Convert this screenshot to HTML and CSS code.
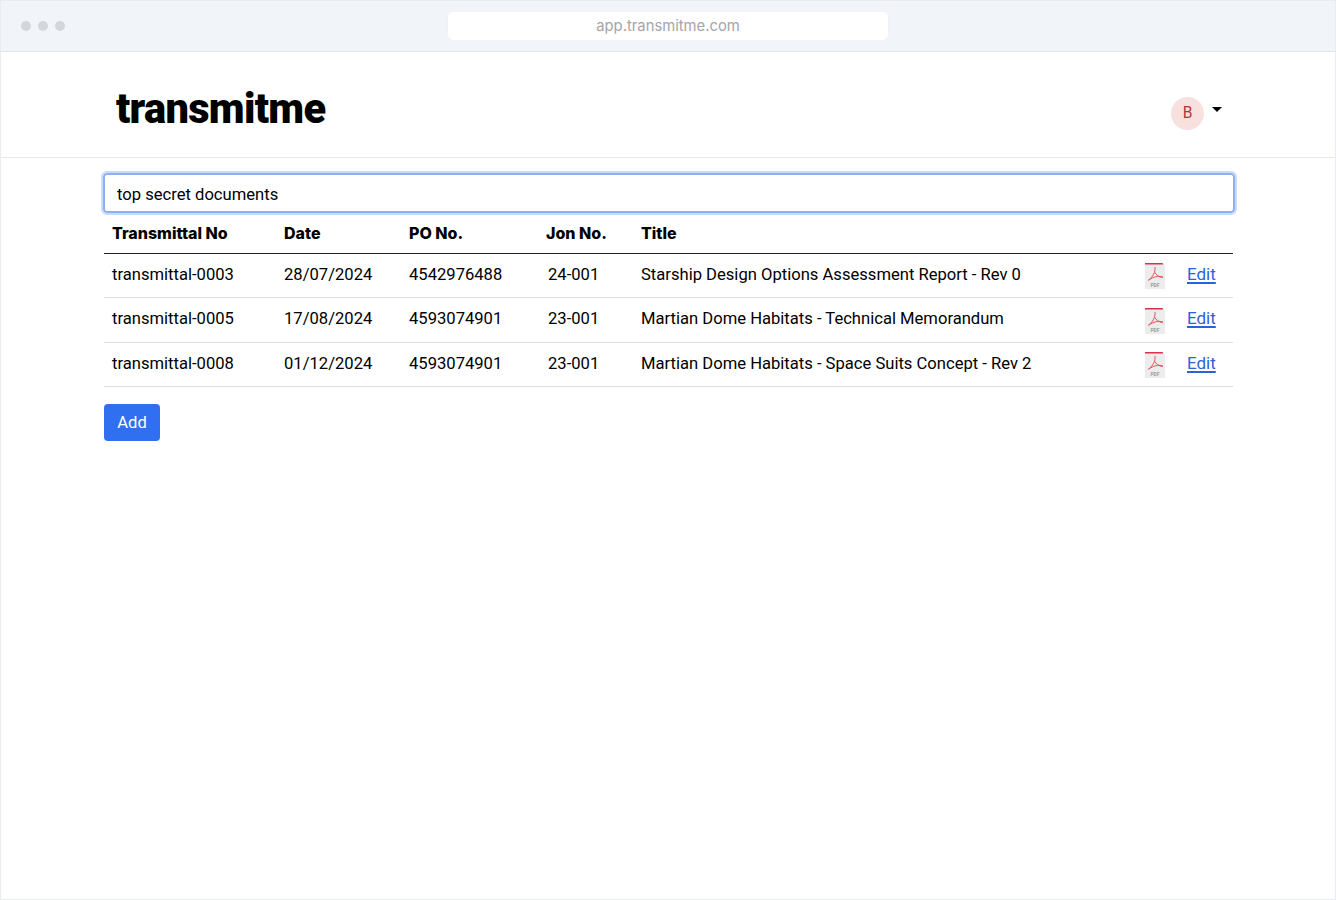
FILE: index.html
```html
<!DOCTYPE html>
<html lang="en">
<head>
<meta charset="utf-8">
<title>transmitme</title>
<link rel="stylesheet" href="styles.css">
</head>
<body>
<div class="window">
  <div class="chrome">
    <div class="dots"><span class="dot"></span><span class="dot"></span><span class="dot"></span></div>
    <div class="address">app.transmitme.com</div>
  </div>
  <header class="topbar">
    <div class="logo">transmitme</div>
    <div class="user">
      <span class="avatar">B</span>
      <span class="caret"></span>
    </div>
  </header>
  <main class="content">
    <input class="search" type="text" value="top secret documents">
    <table class="grid">
      <thead>
        <tr><th class="c-no">Transmittal No</th><th class="c-date">Date</th><th class="c-po">PO No.</th><th class="c-job">Jon No.</th><th>Title</th><th class="c-pdf"></th><th class="c-edit"></th></tr>
      </thead>
      <tbody>
        <tr><td>transmittal-0003</td><td>28/07/2024</td><td>4542976488</td><td class="job">24-001</td><td>Starship Design Options Assessment Report - Rev 0</td>
          <td class="pdf"><svg class="pdf-icon" viewBox="0 0 20 26"><path d="M0 0H17L20 3V26H0Z" fill="#ececec"/><path d="M0 0H17.5L18.5 1.6H0Z" fill="#d9304a"/><path d="M10 4C10.5 9 8 14 3 17.5M10 9.5C11 12 13.5 14 18 14.5M4 17C8 14 13 12.5 18 14" fill="none" stroke="#e0525c" stroke-width="1"/><text x="10" y="23.5" class="pdf-label">PDF</text></svg></td><td class="edit"><a href="#">Edit</a></td></tr>
        <tr><td>transmittal-0005</td><td>17/08/2024</td><td>4593074901</td><td class="job">23-001</td><td>Martian Dome Habitats - Technical Memorandum</td>
          <td class="pdf"><svg class="pdf-icon" viewBox="0 0 20 26"><path d="M0 0H17L20 3V26H0Z" fill="#ececec"/><path d="M0 0H17.5L18.5 1.6H0Z" fill="#d9304a"/><path d="M10 4C10.5 9 8 14 3 17.5M10 9.5C11 12 13.5 14 18 14.5M4 17C8 14 13 12.5 18 14" fill="none" stroke="#e0525c" stroke-width="1"/><text x="10" y="23.5" class="pdf-label">PDF</text></svg></td><td class="edit"><a href="#">Edit</a></td></tr>
        <tr><td>transmittal-0008</td><td>01/12/2024</td><td>4593074901</td><td class="job">23-001</td><td>Martian Dome Habitats - Space Suits Concept - Rev 2</td>
          <td class="pdf"><svg class="pdf-icon" viewBox="0 0 20 26"><path d="M0 0H17L20 3V26H0Z" fill="#ececec"/><path d="M0 0H17.5L18.5 1.6H0Z" fill="#d9304a"/><path d="M10 4C10.5 9 8 14 3 17.5M10 9.5C11 12 13.5 14 18 14.5M4 17C8 14 13 12.5 18 14" fill="none" stroke="#e0525c" stroke-width="1"/><text x="10" y="23.5" class="pdf-label">PDF</text></svg></td><td class="edit"><a href="#">Edit</a></td></tr>
      </tbody>
    </table>
    <button class="add" type="button">Add</button>
  </main>
</div>
</body>
</html>
```
FILE: styles.css
```css
* { box-sizing: border-box; }
html, body { margin: 0; padding: 0; background: #fff; }
body { font-family: Roboto, "Liberation Sans", sans-serif; color: #000; font-size: 16.6px; }
.window { height: 900px; border: 1px solid #e9ecf0; display: flex; flex-direction: column; }
.chrome { height: 51px; flex: none; background: #f1f4f9; border-bottom: 1px solid #e2e5ea; display: flex; align-items: center; justify-content: center; position: relative; }
.dots { position: absolute; left: 20px; top: 20px; display: flex; gap: 7px; }
.dot { width: 10px; height: 10px; border-radius: 50%; background: #d3d7dc; }
.address { width: 440px; height: 28px; margin-top: -1px; background: #fff; border-radius: 5px; box-shadow: 0 0 1px #dfe3e8; color: #a3a5a9; font: 14.8px/28px Inter, sans-serif; text-align: center; }
.topbar { height: 106px; flex: none; border-bottom: 1px solid #e8e8e8; display: flex; justify-content: space-between; padding: 0 113px 0 115px; position: relative; }
.logo { font-size: 41.6px; font-weight: 900; letter-spacing: -0.7px; line-height: 47px; margin-top: 33px; }
.user { display: flex; align-items: flex-start; padding-top: 45px; gap: 8px; }
.avatar { width: 33px; height: 33px; border-radius: 50%; background: #f8e0df; color: #aa3a3a; font-size: 15.6px; line-height: 33px; text-align: center; }
.caret { width: 0; height: 0; margin-top: 10px; border-left: 5.5px solid transparent; border-right: 5.5px solid transparent; border-top: 5.5px solid #000; }
.content { padding: 16px 102px 0 103px; }
.search { display: block; width: calc(100% + 3px); height: 40px; margin: -1px 0 0 -1px; border: 2px solid #8fb0ee; border-radius: 4px; outline: 2px solid #c9dafa; outline-offset: 0; padding: 2px 11px 0 12px; font: 16.6px Roboto, sans-serif; color: #000; background: #fff; }
.grid { width: 100%; border-collapse: collapse; table-layout: fixed; margin-top: 1.6px; }
th { text-align: left; font: 800 16px Inter, Roboto, sans-serif; height: 39px; padding: 0 8px 1px; border-bottom: 1px solid #222; }
td { height: 44.4px; padding: 0 8px 2.6px; border-bottom: 1px solid #dedede; font-size: 16.6px; }
.c-no { width: 172px; }
.c-date { width: 125px; }
.c-po { width: 137px; }
.c-job { width: 95px; }
.c-pdf { width: 55px; }
.c-edit { width: 54px; }
td.job { padding-left: 10px; }
td.pdf { padding: 1px 0 0; }
td.edit { padding: 0 0 3.6px 8px; }
.pdf-icon { display: block; width: 20px; height: 26px; margin-left: 21px; }
.pdf-label { font: 700 5px Roboto, sans-serif; fill: #a0a0a0; text-anchor: middle; }
.edit a { color: #2c62d8; font-size: 17px; text-decoration: underline; text-decoration-thickness: 1.5px; text-underline-offset: 2px; }
.add { display: block; margin-top: 16.5px; width: 56px; height: 37px; border: 0; border-radius: 4px; background: #3070f0; color: #fff; font: 400 16.6px Roboto, sans-serif; }
```
